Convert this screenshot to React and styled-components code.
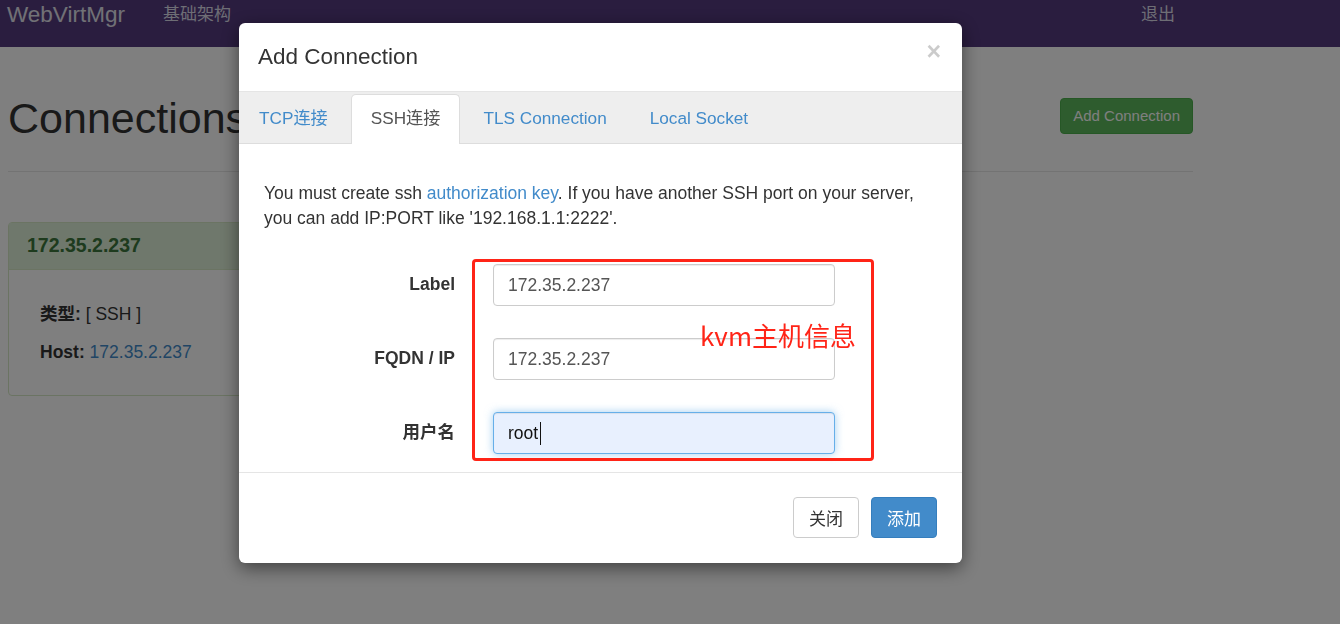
import styled, { createGlobalStyle } from 'styled-components'

const GlobalStyle = createGlobalStyle`
  html, body {
    margin: 0;
    padding: 0;
    background: #fff;
    font-family: "Liberation Sans", Arial, "Noto Sans CJK SC", sans-serif;
    font-size: 17.5px;
    line-height: 1.45;
    color: #333;
  }
  * { box-sizing: border-box; }
`

const Navbar = styled.div`
  display: flex;
  align-items: flex-start;
  height: 47px;
  background: #543a7e;
`

const Brand = styled.div`
  padding: 0 7px;
  font-size: 22.5px;
  line-height: 30px;
  color: #e2e2ec;
`

const NavLink = styled.div`
  margin-left: ${p => p.$push ? 'auto' : '31px'};
  margin-right: ${p => p.$push ? '165px' : '0'};
  font-size: 17px;
  line-height: 30px;
  color: #dcdcea;
`

const Main = styled.div`
  width: 1201px;
  padding: 0 8px;
`

const PageHead = styled.div`
  display: flex;
  justify-content: space-between;
  align-items: flex-start;
  margin-top: 48px;
`

const Title = styled.h1`
  margin: 0;
  font-size: 43px;
  font-weight: 400;
  line-height: 47px;
  color: #333;
`

const GreenButton = styled.div`
  margin-top: 3px;
  height: 36px;
  padding: 0 12px;
  border: 1px solid #4cae4c;
  border-radius: 4px;
  background: #5cb85c;
  color: #fff;
  font-size: 15px;
  line-height: 34px;
`

const Rule = styled.hr`
  margin: 29px 0 50px;
  border: 0;
  border-top: 1px solid #e6e6e6;
`

const Panel = styled.div`
  width: 380px;
  height: 174px;
  border: 1px solid #d6e9c6;
  border-radius: 4px;
`

const PanelHeader = styled.div`
  height: 47px;
  padding: 0 18px;
  background: #dff0d8;
  border-bottom: 1px solid #d6e9c6;
  color: #3c763d;
  font-size: 19.5px;
  font-weight: 700;
  line-height: 45px;
`

const PanelBody = styled.div`
  padding: 32px 31px;
  display: flex;
  flex-direction: column;
  gap: 13px;
  line-height: 25px;
`

const Link = styled.a`
  color: #428bca;
  text-decoration: none;
`

const Backdrop = styled.div`
  position: fixed;
  inset: 0;
  background: rgba(0, 0, 0, 0.5);
`

const Modal = styled.div`
  position: fixed;
  left: 239px;
  top: 23px;
  width: 723px;
  background: #fff;
  border-radius: 6px;
  box-shadow: 0 5px 18px rgba(0, 0, 0, 0.5);
  overflow: hidden;
`

const ModalHeader = styled.div`
  display: flex;
  align-items: center;
  justify-content: space-between;
  height: 69px;
  padding: 0 21px 0 19px;
  border-bottom: 1px solid #e5e5e5;
`

const ModalTitle = styled.div`
  font-size: 22.5px;
  color: #333;
`

const Close = styled.div`
  font-size: 25px;
  font-weight: 700;
  color: #000;
  opacity: 0.2;
  line-height: 1;
  margin-top: -12px;
`

const Tabs = styled.div`
  display: flex;
  gap: 3px;
  height: 52px;
  padding: 2px 0 0 0;
  background: #eee;
  border-bottom: 1px solid #ddd;
`

const Tab = styled.div`
  height: ${p => p.$active ? '50px' : '49px'};
  padding: 0 19px;
  border: 1px solid ${p => p.$active ? '#ddd' : 'transparent'};
  border-bottom: 0;
  border-radius: 5px 5px 0 0;
  background: ${p => p.$active ? '#fff' : 'transparent'};
  color: ${p => p.$active ? '#555' : '#428bca'};
  font-size: 17.2px;
  line-height: 47px;
`

const ModalBody = styled.div`
  position: relative;
  padding: 37px 25px 18px;
`

const Intro = styled.p`
  margin: 0 0 33px;
  line-height: 25px;
`

const Form = styled.div`
  display: flex;
  flex-direction: column;
  gap: 32px;
`

const Row = styled.div`
  display: flex;
  align-items: center;
`

const Label = styled.label`
  width: 191px;
  text-align: right;
  font-weight: 700;
  color: #333;
`

const InputWrap = styled.div`
  position: relative;
  margin-left: 38px;
`

const Input = styled.input`
  display: block;
  width: 342px;
  height: 42px;
  padding: 0 14px;
  border: 1px solid ${p => p.$focus ? '#66afe9' : '#ccc'};
  border-radius: 4px;
  background: ${p => p.$focus ? '#e8f0fe' : '#fff'};
  box-shadow: inset 0 1px 1px rgba(0, 0, 0, 0.075)${p => p.$focus ? ', 0 0 8px rgba(102, 175, 233, 0.6)' : ''};
  font-family: inherit;
  font-size: 17.5px;
  color: ${p => p.$focus ? '#111' : '#555'};
  outline: none;
`

const Caret = styled.span`
  position: absolute;
  left: 47px;
  top: 10px;
  width: 1px;
  height: 23px;
  background: #111;
`

const Annotation = styled.div`
  position: absolute;
  left: 233px;
  top: 115px;
  width: 402px;
  height: 202px;
  border: 3px solid #ff2417;
  border-radius: 4px;
  pointer-events: none;
`

const AnnotationText = styled.div`
  position: absolute;
  left: 225px;
  top: 58px;
  font-size: 26px;
  line-height: 30px;
  color: #ff2417;
  font-family: "Noto Sans CJK SC", "Liberation Sans", sans-serif;
`

const ModalFooter = styled.div`
  display: flex;
  justify-content: flex-end;
  gap: 12px;
  padding: 24px 25px 25px;
  border-top: 1px solid #e5e5e5;
`

const Button = styled.button`
  width: 66px;
  height: 41px;
  border-radius: 4px;
  border: 1px solid ${p => p.$primary ? '#357ebd' : '#ccc'};
  background: ${p => p.$primary ? '#428bca' : '#fff'};
  color: ${p => p.$primary ? '#fff' : '#333'};
  font-family: "Noto Sans CJK SC", sans-serif;
  font-size: 17px;
`

const App = () => {
  return (
    <>
      <GlobalStyle />
      <Navbar>
        <Brand>WebVirtMgr</Brand>
        <NavLink>基础架构</NavLink>
        <NavLink $push>退出</NavLink>
      </Navbar>
      <Main>
        <PageHead>
          <Title>Connections</Title>
          <GreenButton>Add Connection</GreenButton>
        </PageHead>
        <Rule />
        <Panel>
          <PanelHeader>172.35.2.237</PanelHeader>
          <PanelBody>
            <div><b>类型:</b> [ SSH ]</div>
            <div><b>Host:</b> <Link>172.35.2.237</Link></div>
          </PanelBody>
        </Panel>
      </Main>

      <Backdrop />
      <Modal>
        <ModalHeader>
          <ModalTitle>Add Connection</ModalTitle>
          <Close>×</Close>
        </ModalHeader>
        <Tabs>
          <Tab>TCP连接</Tab>
          <Tab $active>SSH连接</Tab>
          <Tab>TLS Connection</Tab>
          <Tab>Local Socket</Tab>
        </Tabs>
        <ModalBody>
          <Intro>
            You must create ssh <Link>authorization key</Link>. If you have another SSH port on your server,
            you can add IP:PORT like '192.168.1.1:2222'.
          </Intro>
          <Form>
            <Row>
              <Label>Label</Label>
              <InputWrap><Input defaultValue="172.35.2.237" /></InputWrap>
            </Row>
            <Row>
              <Label>FQDN / IP</Label>
              <InputWrap><Input defaultValue="172.35.2.237" /></InputWrap>
            </Row>
            <Row>
              <Label>用户名</Label>
              <InputWrap>
                <Input $focus defaultValue="root" />
                <Caret />
              </InputWrap>
            </Row>
          </Form>
          <Annotation>
            <AnnotationText>kvm主机信息</AnnotationText>
          </Annotation>
        </ModalBody>
        <ModalFooter>
          <Button>关闭</Button>
          <Button $primary>添加</Button>
        </ModalFooter>
      </Modal>
    </>
  )
}

export default App
